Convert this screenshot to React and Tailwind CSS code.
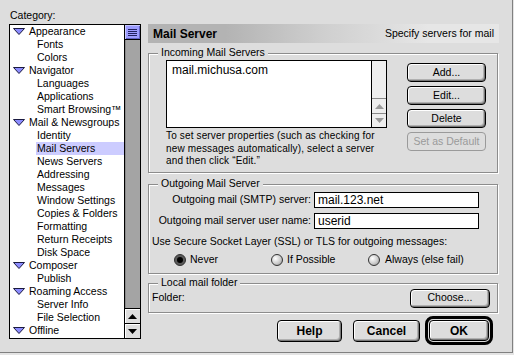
import React from 'react';

const categories = [
  { label: 'Appearance', group: true },
  { label: 'Fonts' },
  { label: 'Colors' },
  { label: 'Navigator', group: true },
  { label: 'Languages' },
  { label: 'Applications' },
  { label: 'Smart Browsing™' },
  { label: 'Mail & Newsgroups', group: true },
  { label: 'Identity' },
  { label: 'Mail Servers', selected: true },
  { label: 'News Servers' },
  { label: 'Addressing' },
  { label: 'Messages' },
  { label: 'Window Settings' },
  { label: 'Copies & Folders' },
  { label: 'Formatting' },
  { label: 'Return Receipts' },
  { label: 'Disk Space' },
  { label: 'Composer', group: true },
  { label: 'Publish' },
  { label: 'Roaming Access', group: true },
  { label: 'Server Info' },
  { label: 'File Selection' },
  { label: 'Offline', group: true },
];

function Triangle() {
  return (
    <svg width="12" height="7" viewBox="0 0 12 7" className="shrink-0">
      <path d="M0.5 0.5 H11.5 L6 6.5 Z" fill="#8c8cff" stroke="#1a1a40" strokeWidth="1" strokeLinejoin="round" />
    </svg>
  );
}

function Arrow({ up, color = '#000' }) {
  return (
    <svg width="9" height="5" viewBox="0 0 9 5">
      <path d={up ? 'M0 5 L4.5 0 L9 5 Z' : 'M0 0 L9 0 L4.5 5 Z'} fill={color} />
    </svg>
  );
}

function MacButton({ children, className = '', disabled }) {
  return (
    <div
      className={`flex items-center justify-center rounded-[4px] border bg-[#dddddd] ${
        disabled
          ? 'border-[#9a9a9a] text-[#9a9a9a]'
          : 'border-black text-black shadow-[inset_1px_1px_0_#ffffff,inset_-1px_-1px_0_#777777,inset_-2px_-2px_0_#b0b0b0]'
      } ${className}`}
    >
      {children}
    </div>
  );
}

function Group({ label, className = '', children }) {
  return (
    <div className={`relative border border-[#8c8c8c] shadow-[inset_1px_1px_0_#ffffff,1px_1px_0_#ffffff] ${className}`}>
      <span className="absolute left-[9px] -top-[8px] bg-[#dddddd] px-[3px] text-[10.5px] leading-[12px]">{label}</span>
      {children}
    </div>
  );
}

function Radio({ checked }) {
  return (
    <span
      className={`w-[12px] h-[12px] rounded-full border border-[#333333] flex items-center justify-center shrink-0 ${
        checked ? 'bg-[#5a5a5a]' : 'bg-[radial-gradient(circle_at_35%_35%,#ffffff,#cccccc_55%,#8a8a8a)]'
      }`}
    >
      {checked && <span className="w-[6px] h-[6px] rounded-full bg-black" />}
    </span>
  );
}

export default function App() {
  return (
    <div className="w-[514px] h-[355px] bg-[#e4e4e4] font-['Liberation_Sans',Arial,sans-serif] text-black overflow-hidden">
      <div className="w-[513px] h-[353px] bg-[#dddddd] border-r border-b border-[#808080] flex">

        {/* Category list */}
        <div className="pl-[9px] pt-[9px] w-[141px] shrink-0">
          <div className="text-[10.5px] leading-[12px] pl-[1px]">Category:</div>
          <div className="mt-[3px] w-[132px] h-[315px] border border-black bg-white flex">
            <div className="w-[114px] pt-[0px]">
              {categories.map((c) =>
                c.group ? (
                  <div key={c.label} className="h-[13px] flex items-center pl-[3px] gap-[4px] text-[10.5px] whitespace-nowrap">
                    <Triangle />
                    <span>{c.label}</span>
                  </div>
                ) : (
                  <div key={c.label} className="h-[13px] flex items-center pl-[26px]">
                    <span
                      className={`flex-1 h-[13px] flex items-center pl-[1px] text-[10.5px] whitespace-nowrap ${
                        c.selected ? 'bg-[#ccccff]' : ''
                      }`}
                    >
                      {c.label}
                    </span>
                  </div>
                )
              )}
            </div>
            <div className="w-[16px] border-l border-black flex flex-col">
              <div className="h-[15px] bg-[#9c9cff] border-b border-black shadow-[inset_1px_1px_0_#c8c8ff,inset_-1px_-1px_0_#6060c0] flex flex-col items-center justify-center gap-[1px]">
                <span className="w-[9px] h-[1px] bg-[#202060]" />
                <span className="w-[9px] h-[1px] bg-[#202060]" />
                <span className="w-[9px] h-[1px] bg-[#202060]" />
                <span className="w-[9px] h-[1px] bg-[#202060]" />
              </div>
              <div className="flex-1 bg-[#a4a4a4] shadow-[inset_1px_0_0_#8a8a8a]" />
              <div className="h-[15px] border-t border-black bg-[#dddddd] flex items-center justify-center shadow-[inset_1px_1px_0_#ffffff]">
                <Arrow up />
              </div>
              <div className="h-[15px] border-t border-black bg-[#dddddd] flex items-center justify-center shadow-[inset_1px_1px_0_#ffffff]">
                <Arrow />
              </div>
            </div>
          </div>
        </div>

        {/* Settings panel */}
        <div className="pl-[7px] pt-[24px] w-[358px] flex flex-col">
          <div className="h-[19px] w-[351px] flex items-center justify-between pl-[5px] pr-[5px] bg-[linear-gradient(to_right,#b3b3b3_0%,#b3b3b3_22%,#cfcfcf_50%,#e6e6e6_80%,#e6e6e6_100%)]">
            <span className="text-[12px] font-bold">Mail Server</span>
            <span className="text-[10.5px]">Specify servers for mail</span>
          </div>

          <Group label="Incoming Mail Servers" className="mt-[10px] w-[350px] h-[120px]">
            <div className="flex pl-[17px] pt-[6px]">
              <div className="w-[221px]">
                <div className="h-[68px] border border-black bg-white flex">
                  <div className="flex-1 pl-[5px] pt-[2px] text-[12px] leading-[14px]">mail.michusa.com</div>
                  <div className="w-[15px] border-l border-black bg-[#eeeeee] flex flex-col">
                    <div className="flex-1" />
                    <div className="h-[15px] border-t border-[#8a8a8a] flex items-center justify-center">
                      <Arrow up color="#9a9a9a" />
                    </div>
                    <div className="h-[14px] border-t border-[#8a8a8a] flex items-center justify-center">
                      <Arrow color="#9a9a9a" />
                    </div>
                  </div>
                </div>
                <p className="mt-[2px] text-[10px] leading-[12.5px] tracking-[0.15px]">
                  To set server properties (such as checking for
                  <br />
                  new messages automatically), select a server
                  <br />
                  and then click “Edit.”
                </p>
              </div>
              <div className="ml-[20px] mt-[3px] flex flex-col gap-[4px]">
                <MacButton className="w-[79px] h-[19px] text-[10.5px]">Add...</MacButton>
                <MacButton className="w-[79px] h-[19px] text-[10.5px]">Edit...</MacButton>
                <MacButton className="w-[79px] h-[19px] text-[10.5px]">Delete</MacButton>
                <MacButton disabled className="w-[79px] h-[19px] text-[10.5px]">Set as Default</MacButton>
              </div>
            </div>
          </Group>

          <Group label="Outgoing Mail Server" className="mt-[11px] w-[350px] h-[90px]">
            <div className="pt-[7px] flex flex-col">
              <div className="flex items-center h-[16px]">
                <span className="w-[162px] text-right text-[10.5px]">Outgoing mail (SMTP) server:</span>
                <input
                  readOnly
                  defaultValue="mail.123.net"
                  className="ml-[3px] w-[165px] h-[16px] border border-black bg-white pl-[3px] text-[12px] outline-none"
                />
              </div>
              <div className="flex items-center h-[16px] mt-[5px]">
                <span className="w-[162px] text-right text-[10.5px]">Outgoing mail server user name:</span>
                <input
                  readOnly
                  defaultValue="userid"
                  className="ml-[3px] w-[165px] h-[16px] border border-black bg-white pl-[3px] text-[12px] outline-none"
                />
              </div>
              <div className="mt-[6px] pl-[3px] text-[10.5px] leading-[12px]">
                Use Secure Socket Layer (SSL) or TLS for outgoing messages:
              </div>
              <div className="mt-[7px] pl-[25px] flex h-[12px] text-[10.5px]">
                <div className="w-[97px] flex items-center gap-[4px]">
                  <Radio checked />
                  <span>Never</span>
                </div>
                <div className="w-[97px] flex items-center gap-[4px]">
                  <Radio />
                  <span>If Possible</span>
                </div>
                <div className="flex items-center gap-[5px]">
                  <Radio />
                  <span>Always (else fail)</span>
                </div>
              </div>
            </div>
          </Group>

          <Group label="Local mail folder" className="mt-[9px] w-[350px] h-[30px]">
            <div className="h-full flex items-center justify-between pl-[3px] pr-[7px]">
              <span className="text-[10.5px]">Folder:</span>
              <MacButton className="w-[80px] h-[19px] text-[10.5px]">Choose...</MacButton>
            </div>
          </Group>

          <div className="mt-[3px] w-[351px] flex items-center justify-end pr-[6px]">
            <MacButton className="w-[65px] h-[22px] text-[12px] font-bold">Help</MacButton>
            <MacButton className="ml-[11px] w-[67px] h-[22px] text-[12px] font-bold">Cancel</MacButton>
            <div className="ml-[5px] w-[68px] h-[29px] border-[3px] border-black rounded-[8px] p-[1px] flex">
              <MacButton className="flex-1 text-[12px] font-bold">OK</MacButton>
            </div>
          </div>
        </div>
      </div>
    </div>
  );
}
